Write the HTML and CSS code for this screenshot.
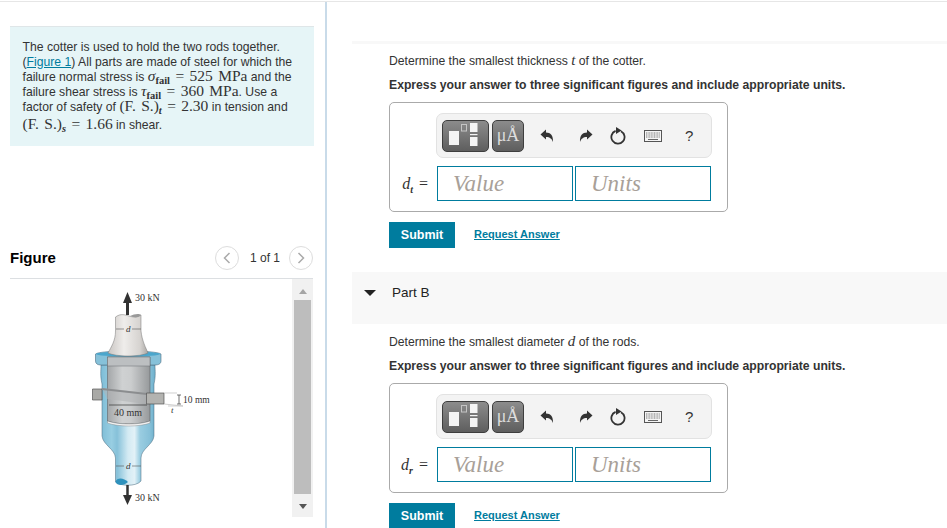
FILE: index.html
```html
<!DOCTYPE html>
<html lang="en">
<head>
<meta charset="utf-8">
<title>Cotter problem</title>
<link rel="stylesheet" href="styles.css">
</head>
<body>
<svg class="defs" width="0" height="0" aria-hidden="true">
  <defs>
    <symbol id="i-undo" viewBox="0 0 14 14"><path d="M0.5 5.4 L6 0.6 V3.4 C10.5 3.4 13.4 6.2 13 13 C12 10 10 8 6 8 V10.4 Z" fill="#333"/></symbol>
    <symbol id="i-redo" viewBox="0 0 14 14"><path d="M13.5 5.4 L8 0.6 V3.4 C3.5 3.4 0.6 6.2 1 13 C2 10 4 8 8 8 V10.4 Z" fill="#333"/></symbol>
    <symbol id="i-reset" viewBox="0 0 16 18"><path d="M5.6 3.9 A6.6 6.6 0 1 0 11 4.2" fill="none" stroke="#333" stroke-width="1.800"/><path d="M6 0 L11.6 3.6 L6 7 Z" fill="#333"/></symbol>
    <symbol id="i-keys" viewBox="0 0 18 12"><rect x="0.5" y="0.5" width="17" height="11" fill="#f5f5f5" stroke="#555"/><path d="M2 3h14M2 5h14M2 7h14" stroke="#777" stroke-width="1" stroke-dasharray="1 .6"/><path d="M4 9.5h10" stroke="#666"/></symbol>
  </defs>
</svg>
<div class="app">
  <aside class="left">
    <div class="info">
      The cotter is used to hold the two rods together. (<a class="link" href="#">Figure 1</a>) All parts are made of steel for which the failure normal stress is <span class="m"><i>σ</i><sub>fail</sub> = 525 MPa</span> and the failure shear stress is <span class="m"><i>τ</i><sub>fail</sub> = 360 MPa</span>. Use a factor of safety of <span class="m">(F. S.)<sub><i>t</i></sub> = 2.30</span> in tension and <span class="m tall">(F. S.)<sub><i>s</i></sub> = 1.66</span> in shear.
    </div>
    <div class="fig-head">
      <h2 class="fig-title">Figure</h2>
      <div class="pager">
        <span class="circle"><svg width="8" height="12" viewBox="0 0 8 12"><path d="M6.5 1 L1.5 6 L6.5 11" fill="none" stroke="#aaa" stroke-width="1.5"/></svg></span>
        <span class="count">1 of 1</span>
        <span class="circle"><svg width="8" height="12" viewBox="0 0 8 12"><path d="M1.5 1 L6.5 6 L1.5 11" fill="none" stroke="#aaa" stroke-width="1.5"/></svg></span>
      </div>
    </div>
    <div class="fig-body">
      <div class="fig-pic">
        <svg width="130" height="225" viewBox="85 285 130 225" font-family="'Liberation Serif',serif" font-size="10" fill="#333">
          <defs>
            <linearGradient id="steel" x1="0" x2="1" y1="0" y2="0">
              <stop offset="0" stop-color="#a3a6a8"/><stop offset=".35" stop-color="#cfd1d2"/><stop offset=".55" stop-color="#cbcdce"/><stop offset="1" stop-color="#96999b"/>
            </linearGradient>
            <linearGradient id="rod" x1="0" x2="1" y1="0" y2="0">
              <stop offset="0" stop-color="#c9c5c2"/><stop offset=".4" stop-color="#efedeb"/><stop offset=".8" stop-color="#d6d3d0"/><stop offset="1" stop-color="#a9a6a3"/>
            </linearGradient>
            <linearGradient id="glass" x1="0" x2="1" y1="0" y2="0">
              <stop offset="0" stop-color="#7dbcd6"/><stop offset=".2" stop-color="#98cee2"/><stop offset=".3" stop-color="#86c1d9"/><stop offset=".5" stop-color="#d3eaf3"/><stop offset=".62" stop-color="#e2f1f7"/><stop offset=".72" stop-color="#9acde1"/><stop offset=".9" stop-color="#86c0d8"/><stop offset="1" stop-color="#6cafcb"/>
            </linearGradient>
            <filter id="soft"><feGaussianBlur stdDeviation="0.35"/></filter>
          </defs>
          <g filter="url(#soft)">
            <path d="M127.5 293 L132 304 H129 V316 H126 V304 H123 Z" fill="#333"/>
            <path d="M101 366 C101 372 100 376 102 385 V437 C103 446 115 450 115.5 459 V483 C120 487 136 488 141 482 V459 C141 450 153 446 154 437 V385 C156 376 155 372 155 366 Z" fill="url(#glass)" stroke="#47667a" stroke-width=".5"/>
            <path d="M95.500 355 C100 351 156 351 161 355 V362 C161 365 158 366 155 366 H101 C98 366 95.500 365 95.500 362 Z" fill="#86c1d9" stroke="#4d6f85" stroke-width=".6"/>
            <ellipse cx="128" cy="355" rx="32" ry="2.500" fill="#4ba6cc"/>
            <path d="M107.500 358 H150 V422 C140 426 118 426 107.500 422 Z" fill="url(#steel)" stroke="#5f6366" stroke-width=".6"/>
            <rect x="107.500" y="358" width="42.500" height="9" fill="#bcbfc1" stroke="#6a6e70" stroke-width=".5"/>
            <path d="M107.500 422 C118 426 140 426 150 422 V424 C140 428 118 428 107.500 424 Z" fill="#f5f5f5" stroke="#777" stroke-width=".4"/>
            <path d="M115.500 318 C121 314 125 316 129 317 C134 319 139 317 141 316 V332 C142 342 146 349 148 354 C140 358 116 358 108 354 C111 348 115.500 342 115.500 332 Z" fill="url(#rod)" stroke="#777" stroke-width=".5"/>
            <path d="M130 317 C134 315 139 314 141 316 C139 319 134 319 130 317 Z" fill="#999"/>
            <path d="M92.500 390 H102 V401 H92.500 Z" fill="#a9a9a6" stroke="#555" stroke-width=".7"/>
            <path d="M102 389 L147 394 V405 L107 400 Z" fill="#b0b3b4" opacity=".55"/>
            <path d="M102 389 L147 394 L147 396 L102 391 Z" fill="#8b8d8f"/>
            <path d="M146.500 394 H164 V405 H146.500 Z" fill="#b3b3b0" stroke="#555" stroke-width=".7"/>
            <path d="M164 394 H177 M164 405 L183 407 M168 407 H183" stroke="#bbb" stroke-width=".7" fill="none"/>
            <path d="M179 396 V405 M177 396 H181 M177 405 H181" stroke="#333" stroke-width=".7" fill="none"/>
            <path d="M109 406 H147" stroke="#333" stroke-width=".7"/>
            <path d="M115.500 483 C117 478 124 479 128 483 C124 487 117 487 115.500 483 Z" fill="#2f92bd"/>
            <path d="M116 330 H124 M132 330 H141 M116 467 H124 M132 467 H141" stroke="#555" stroke-width=".6"/>
            <path d="M127.500 486 V497" stroke="#333" stroke-width="2.500"/>
            <path d="M123 496 H132 L127.500 506 Z" fill="#333"/>
          </g>
          <text x="135" y="301.500">30 kN</text>
          <text x="135" y="501.500">30 kN</text>
          <text x="183" y="403.500" font-size="9.500">10 mm</text>
          <text x="114" y="417">40 mm</text>
          <text x="126" y="333" font-style="italic" font-size="9">d</text>
          <text x="126" y="470" font-style="italic" font-size="9">d</text>
          <text x="171" y="414" font-style="italic" font-size="9">t</text>
        </svg>
      </div>
      <div class="scroll">
        <span class="arrow-up"></span>
        <span class="thumb"></span>
        <span class="arrow-down"></span>
      </div>
    </div>
  </aside>
  <main class="right">
    <div class="rule"></div>
    <section class="question">
      <p class="q">Determine the smallest thickness <i class="mv">t</i> of the cotter.</p>
      <p class="q strong">Express your answer to three significant figures and include appropriate units.</p>
      <div class="answer">
        <div class="toolbar">
          <span class="tbtn wide"><svg width="34" height="26" viewBox="0 0 34 26"><rect x="0" y="8" width="10" height="14" fill="#f4f4f4"/><rect x="12.500" y="1.500" width="5" height="6.500" fill="none" stroke="#c4c4c4"/><rect x="21" y="0" width="7.500" height="9" fill="#f4f4f4"/><rect x="21" y="11" width="7.500" height="1.200" fill="#f4f4f4"/><rect x="21" y="14" width="7.500" height="9" fill="#f4f4f4"/></svg></span>
          <span class="tbtn unit">μÅ</span>
          <svg class="ico first" width="14" height="14"><use href="#i-undo"/></svg>
          <svg class="ico redo" width="14" height="14"><use href="#i-redo"/></svg>
          <svg class="ico reset" width="16" height="18"><use href="#i-reset"/></svg>
          <svg class="ico keys" width="18" height="12"><use href="#i-keys"/></svg>
          <span class="help">?</span>
        </div>
        <div class="row">
          <label class="lab"><i>d<sub>t</sub></i> =</label>
          <input class="field" placeholder="Value">
          <input class="field" placeholder="Units">
        </div>
      </div>
      <div class="actions">
        <button class="submit">Submit</button>
        <a class="req" href="#">Request Answer</a>
      </div>
    </section>
    <div class="band"><span class="tri"></span><span class="part">Part B</span></div>
    <section class="question">
      <p class="q">Determine the smallest diameter <i class="mv">d</i> of the rods.</p>
      <p class="q strong">Express your answer to three significant figures and include appropriate units.</p>
      <div class="answer">
        <div class="toolbar">
          <span class="tbtn wide"><svg width="34" height="26" viewBox="0 0 34 26"><rect x="0" y="8" width="10" height="14" fill="#f4f4f4"/><rect x="12.500" y="1.500" width="5" height="6.500" fill="none" stroke="#c4c4c4"/><rect x="21" y="0" width="7.500" height="9" fill="#f4f4f4"/><rect x="21" y="11" width="7.500" height="1.200" fill="#f4f4f4"/><rect x="21" y="14" width="7.500" height="9" fill="#f4f4f4"/></svg></span>
          <span class="tbtn unit">μÅ</span>
          <svg class="ico first" width="14" height="14"><use href="#i-undo"/></svg>
          <svg class="ico redo" width="14" height="14"><use href="#i-redo"/></svg>
          <svg class="ico reset" width="16" height="18"><use href="#i-reset"/></svg>
          <svg class="ico keys" width="18" height="12"><use href="#i-keys"/></svg>
          <span class="help">?</span>
        </div>
        <div class="row">
          <label class="lab"><i>d<sub>r</sub></i> =</label>
          <input class="field" placeholder="Value">
          <input class="field" placeholder="Units">
        </div>
      </div>
      <div class="actions">
        <button class="submit">Submit</button>
        <a class="req" href="#">Request Answer</a>
      </div>
    </section>
  </main>
</div>
</body>
</html>
```
FILE: styles.css
```css
* { box-sizing: border-box; }
html, body { margin: 0; height: 528px; overflow: hidden; background: #fff; }
body { font: 12.2px "Liberation Sans", Arial, sans-serif; color: #333; }
.defs { display: block; height: 0; }
.app { display: flex; height: 528px; border-top: 1px solid #e6e6e6; margin-top: 1px; }
.left { width: 327px; flex: none; border-right: 2px solid #c9dbe9; padding: 24px 12px 0 10px; }
.info { width: 304px; height: 120px; background: #e6f5f7; border-top: 1px solid #dfe6e8; padding: 13px 10px 0 12.5px; line-height: 15px; }
.link { color: #007c9e; }
.m { font-family: "Liberation Serif", serif; font-size: 15.5px; line-height: 0; word-spacing: 1.5px; }
.m sub { font-size: 10.500px; line-height: 0; font-weight: bold; vertical-align: -3px; }
.tall { display: inline-block; line-height: 18px; }
.fig-head { display: flex; justify-content: space-between; align-items: center; width: 303px; height: 34px; margin-top: 99px; border-bottom: 1px solid #dcdfe2; padding-bottom: 8px; }
.fig-title { margin: 0; font-size: 15px; font-weight: bold; color: #000; }
.pager { display: flex; align-items: center; gap: 10px; }
.circle { display: flex; align-items: center; justify-content: center; width: 24px; height: 24px; border: 1px solid #ddd; border-radius: 50%; }
.count { color: #333; font-size: 12px; margin-left: 1px; margin-right: -1px; }
.fig-body { display: flex; width: 303px; height: 238px; }
.fig-pic { flex: 1; padding: 5px 0 0 75px; }
.scroll { flex: none; width: 21px; background: #f1f1f1; display: flex; flex-direction: column; align-items: center; padding: 10px 0 0; }
.arrow-up { width: 0; height: 0; border: 4.500px solid transparent; border-top: 0; border-bottom: 5px solid #a5a5a5; }
.thumb { width: 17px; height: 194px; margin-top: 6px; background: #bdbdbd; }
.arrow-down { width: 0; height: 0; margin-top: 10px; border: 4.500px solid transparent; border-bottom: 0; border-top: 5px solid #555; }
.right { flex: 1; padding-left: 25px; min-width: 0; }
.rule { height: 3px; margin-top: 39px; background: #f8f8f8; }
.question { padding-left: 37px; padding-top: 9px; }
.q { margin: 0 0 8px; height: 16px; line-height: 16px; }
.strong { font-weight: bold; margin-bottom: 9px; }
.mv { font-family: "Liberation Serif", serif; font-size: 15px; line-height: 0; }
.answer { width: 339px; height: 110px; border: 1px solid #aaa; border-radius: 5px; padding: 10px 15px 0 0; }
.toolbar { display: flex; align-items: center; height: 45px; margin-left: 46px; background: #f3f3f3; border: 1px solid #e2e2e2; border-radius: 7px; padding-left: 5px; }
.tbtn { display: flex; align-items: center; justify-content: center; height: 32px; border: 1px solid #3e3e3e; border-radius: 5px; background: linear-gradient(#8c8c8c, #5e5e5e); }
.wide { width: 47px; }
.unit { width: 32px; margin-left: 3px; color: #ddd; font: 18px "Liberation Serif", serif; }
.ico { flex: none; margin-left: 21px; }
.first { margin-left: 16px; }
.redo { margin-left: 25px; }
.reset { margin-left: 17px; }
.keys { margin-left: 18px; }
.help { margin-left: 23px; font-size: 15px; color: #333; }
.row { display: flex; align-items: center; gap: 2px; margin-top: 8px; }
.lab { width: 45px; flex: none; text-align: right; padding-right: 7px; font: 16px "Liberation Serif", serif; word-spacing: 2px; color: #333; }
.lab sub { font-size: 10px; font-weight: bold; line-height: 0; }
.field { width: 136px; height: 35px; border: 1px solid #007c9e; border-radius: 0; padding: 0 15px; background: #fff; font: italic 23px "Liberation Serif", serif; outline: none; }
.field::placeholder { color: #a8a098; opacity: 1; }
.actions { display: flex; align-items: center; margin-top: 10px; gap: 19px; }
.submit { width: 66px; height: 26px; border: 0; padding: 0; background: #007c9e; color: #fff; font: bold 12.5px "Liberation Sans", Arial, sans-serif; }
.req { color: #007c9e; font-weight: bold; font-size: 11px; margin-bottom: 2px; }
.band { display: flex; align-items: flex-start; height: 52px; margin: 24px 0 1px; padding: 13px 0 0 12px; background: #f8f8f8; }
.tri { width: 0; height: 0; margin-top: 5px; border: 6px solid transparent; border-bottom: 0; border-top: 6px solid #222; }
.part { margin-left: 16px; font-size: 13.500px; color: #222; line-height: 15px; }
```
